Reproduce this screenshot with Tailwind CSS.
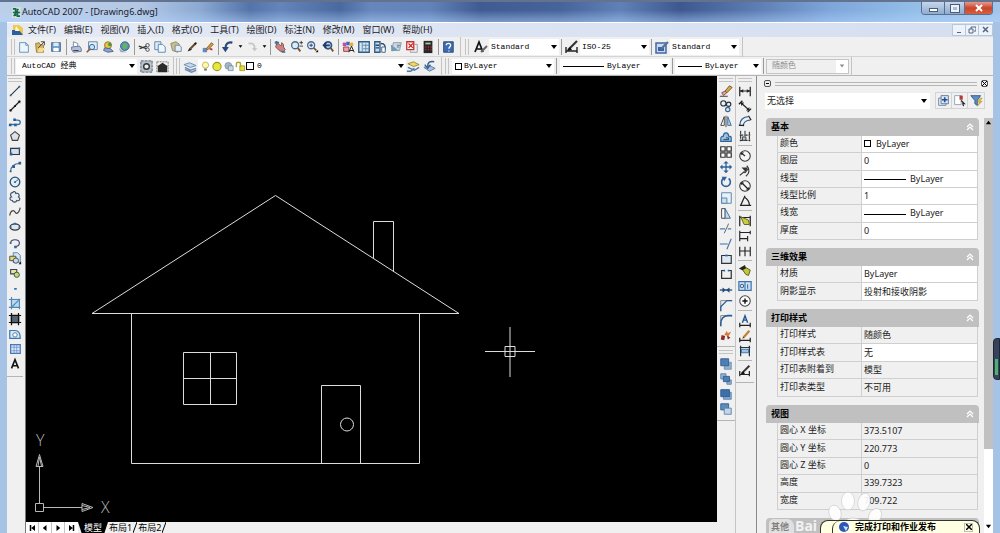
<!DOCTYPE html>
<html lang="zh-CN">
<head>
    <meta charset="UTF-8">
    <meta name="viewport" content="width=device-width, initial-scale=1.0">
    <title>AutoCAD 2007 - [Drawing6.dwg]</title>
    <script src="https://cdn.jsdelivr.net/npm/@tailwindcss/browser@4"></script>
</head>
<body class="h-screen overflow-hidden bg-[#a9c5e6] font-['Noto_Sans','Noto_Sans_CJK_SC',sans-serif] text-[9px] leading-[12px] text-[#222]">

    <!-- Icon set -->
    <svg class="hidden">
        <defs>
            <!-- standard toolbar -->
            <symbol id="new" viewBox="0 0 16 16"><path d="M3 3h7l3 3v8H3z" fill="#eaf5fc" stroke="#5c8db8"/><path d="M10 3v3h3" fill="none" stroke="#5c8db8"/></symbol>
            <symbol id="open" viewBox="0 0 16 16"><path d="M3 4l4-1 1 2 4 1v8H4z" fill="#d8b760" stroke="#8f7a3c"/><path d="M6 9l7-7M9 2h4v4" stroke="#333" fill="none"/><path d="M5 14l2-5h7l-3 5z" fill="#f3dd93"/></symbol>
            <symbol id="save" viewBox="0 0 16 16"><path d="M3 3h10v10H3z" fill="#6f9ac4" stroke="#3c658f"/><path d="M5 3h6v4H5z" fill="#dceaf5"/><path d="M5 9h6v4H5z" fill="#fff"/></symbol>
            <symbol id="print" viewBox="0 0 16 16"><path d="M5 7V2l5 2v4" fill="#fff" stroke="#6d83a8"/><path d="M3 8l9-1 2 3v3l-9 1-2-3z" fill="#b3bfdc" stroke="#5e6f99"/><path d="M5 12h6" stroke="#333"/></symbol>
            <symbol id="preview" viewBox="0 0 16 16"><path d="M4 2h10v9H4z" fill="#dfeefa" stroke="#5d7fa8"/><circle cx="8" cy="8" r="3" fill="#c6e4f8" stroke="#335c8d"/><path d="M6 10l-4 4" stroke="#8a6240" stroke-width="2"/></symbol>
            <symbol id="publish" viewBox="0 0 16 16"><circle cx="8" cy="6" r="4" fill="#e8c438" stroke="#8a6b20"/><path d="M4 9l7 1 3 3-6 1-5-2z" fill="#8aa3d0" stroke="#4c618f"/><circle cx="10" cy="5" r="2" fill="#3b9a55"/></symbol>
            <symbol id="web" viewBox="0 0 16 16"><circle cx="9" cy="7" r="5" fill="#5590c0" stroke="#33638f"/><path d="M8 3l4 2-1 4-3 2-2-4z" fill="#69b45a"/><path d="M2 9l4 3 5 2-7 0z" fill="#9dacc2"/></symbol>
            <symbol id="cut" viewBox="0 0 16 16"><path d="M2 7l9 3M3 10l8-3" stroke="#333" stroke-width="1.5"/><circle cx="12" cy="6" r="2" fill="none" stroke="#345"/><circle cx="12" cy="11" r="2" fill="none" stroke="#345"/></symbol>
            <symbol id="copy" viewBox="0 0 16 16"><path d="M2 2h7v9H2z" fill="#dcebf8" stroke="#5580ac"/><path d="M6 5h5l3 3v6H6z" fill="#eff7fd" stroke="#5580ac"/></symbol>
            <symbol id="paste" viewBox="0 0 16 16"><path d="M2 4l6-2 4 3-2 9-6-2z" fill="#cabf8e" stroke="#8d8358"/><path d="M7 6h5l2 2v5H7z" fill="#e4eef8" stroke="#6685a9"/></symbol>
            <symbol id="match" viewBox="0 0 16 16"><path d="M3 13l2-4 3 2z" fill="#222"/><path d="M6 10l6-6" stroke="#704b30" stroke-width="2.5"/><path d="M11 5l2-2" stroke="#222" stroke-width="2"/></symbol>
            <symbol id="blockedit" viewBox="0 0 16 16"><path d="M2 9h5v5H2z" fill="#6289bd"/><path d="M6 10l6-7 2 2-6 6z" fill="#dd9f3c" stroke="#834c20"/><path d="M10 10l3 1" stroke="#a33" stroke-width="2"/></symbol>
            <symbol id="undo" viewBox="0 0 16 16"><path d="M13 3C7 2 5 5 5 10" fill="none" stroke="#274878" stroke-width="2.5"/><path d="M1 8h8l-4 6z" fill="#274878"/></symbol>
            <symbol id="redo" viewBox="0 0 16 16"><path d="M4 4c5-1 7 1 7 6" fill="none" stroke="#c3c7cb" stroke-width="2"/><path d="M8 9h6l-3 4z" fill="#c3c7cb"/></symbol>
            <symbol id="pan" viewBox="0 0 16 16"><path d="M4 5l2-1 3 3 1-4 2 2 0 3 2 3-3 3-4-2-4-4z" fill="#c9847c" stroke="#84494b"/><path d="M10 13l4 1M2 3h5M4 1v4" stroke="#3b6ea5" stroke-width="2"/></symbol>
            <symbol id="zoomrt" viewBox="0 0 16 16"><circle cx="7" cy="6" r="4" fill="#d9edf9" stroke="#476a95" stroke-width="1.5"/><path d="M10 9l3 4" stroke="#76502f" stroke-width="2"/><path d="M12 3h4M14 1v4M12 7h4" stroke="#333"/></symbol>
            <symbol id="zoomwin" viewBox="0 0 16 16"><circle cx="7" cy="6" r="4" fill="#d9edf9" stroke="#476a95" stroke-width="1.5"/><path d="M5 6h4M7 4v4" stroke="#335"/><path d="M10 9l3 3" stroke="#76502f" stroke-width="2"/><path d="M12 14h3v-3z" fill="#111"/></symbol>
            <symbol id="zoomprev" viewBox="0 0 16 16"><circle cx="8" cy="6" r="4" fill="#bcd6eb" stroke="#335580" stroke-width="2"/><path d="M11 9l3 4" stroke="#76502f" stroke-width="2"/><path d="M3 6h7M6 3L3 6l3 3" stroke="#213a6b" stroke-width="2" fill="none"/></symbol>
            <symbol id="props" viewBox="0 0 16 16"><path d="M2 3h4v4H2z" fill="#b74fae"/><path d="M6 2h4v4H6z" fill="#3d65c0"/><path d="M10 3h4v4h-4z" fill="#e1b13a"/><path d="M3 8h6v5H3z" fill="#e9a8a8" stroke="#934"/><path d="M9 14l3-7 3 7M10 12h4" stroke="#111" fill="none"/></symbol>
            <symbol id="center" viewBox="0 0 16 16"><path d="M2 2h12v12H2z" fill="#d5e6f3" stroke="#2f5a83" stroke-width="1.5"/><path d="M6 2v12M6 6h8M6 10h8M10 4v9" stroke="#5e87ad"/></symbol>
            <symbol id="palette" viewBox="0 0 16 16"><path d="M2 2h6v12H2z" fill="#c5daec" stroke="#2f5a83" stroke-width="1.5"/><path d="M9 4c5 0 5 3 5 7M3 6h4M3 9h4" stroke="#27466e" stroke-width="1.5" fill="none"/><path d="M10 8h4v6h-4z" fill="#fff" stroke="#2f5a83"/></symbol>
            <symbol id="sheet" viewBox="0 0 16 16"><path d="M5 3h9l-2 9H3z" fill="#cbd7e0" stroke="#8296a8"/><path d="M2 5l8 6-7 2" fill="#6f9cb4"/><path d="M9 6h4M9 8h3" stroke="#5d7590"/></symbol>
            <symbol id="markup" viewBox="0 0 16 16"><path d="M2 2h8v9H2z" fill="#fff" stroke="#c03434" stroke-width="1.5"/><path d="M4 4l5 5M9 4L4 9" stroke="#d22" stroke-width="1.5"/><path d="M11 5h3v9H6v-2" fill="none" stroke="#8e97a1"/></symbol>
            <symbol id="calc" viewBox="0 0 16 16"><path d="M3 1h10v14H3z" fill="#272727"/><path d="M5 3h6v2H5z" fill="#a7c7a2"/><path d="M5 8h1M8 8h1M11 8h1M5 11h1M8 11h1M11 11h1" stroke="#e24" stroke-width="1.5"/></symbol>
            <symbol id="help" viewBox="0 0 16 16"><path d="M3 2h11v12H3z" fill="#3c6cae" stroke="#234878"/><path d="M6 6c0-3 5-3 5 0 0 2-2 2-2 4M9 12v1" fill="none" stroke="#fff" stroke-width="1.5"/></symbol>
            <symbol id="textstyle" viewBox="0 0 16 16"><path d="M2 13L6 3l4 10M4 10h4" fill="none" stroke="#111" stroke-width="1.7"/><path d="M8 13l6-6" stroke="#666" stroke-width="2"/></symbol>
            <symbol id="dimstyle" viewBox="0 0 16 16"><path d="M2 8v6M13 8v6M2 12h11" stroke="#222" stroke-width="1.4"/><path d="M4 11l9-9" stroke="#333" stroke-width="2.2"/><path d="M3 12l3-4 2 3z" fill="#111"/></symbol>
            <symbol id="tablestyle" viewBox="0 0 16 16"><path d="M2 4h10v10H2z" fill="#c7daf0" stroke="#4467a3" stroke-width="1.5"/><path d="M4 8h6v4H4z" fill="#3d62a5"/><path d="M7 10l7-7" stroke="#54709c" stroke-width="2.2"/></symbol>
            <symbol id="gear" viewBox="0 0 16 16"><path d="M2 2h12v12H2z" fill="#b8c3cc" stroke="#546371" stroke-dasharray="3 1"/><circle cx="8" cy="8" r="3" fill="#e9eef2" stroke="#333" stroke-width="1.5"/></symbol>
            <symbol id="myspace" viewBox="0 0 16 16"><path d="M2 8l6-4 6 4h-1v6H3V8z" fill="#2b2b2b"/><path d="M2 3h12M2 3v11M14 3v11" stroke="#777" stroke-dasharray="2 1"/></symbol>
            <symbol id="layers" viewBox="0 0 16 16"><path d="M1 6l6-2 7 3-6 2z" fill="#c8d8ea" stroke="#6c8cb4"/><path d="M2 9l6 3 6-2M2 11l7 3 5-2" fill="none" stroke="#6c8cb4" stroke-width="1.5"/></symbol>
            <symbol id="laycur" viewBox="0 0 16 16"><path d="M2 5l6-2 6 3-6 2z" fill="#edd96b" stroke="#9b8b35"/><path d="M2 9l7 3 5-3M1 13h4l4-3" fill="none" stroke="#527ba8" stroke-width="1.5"/></symbol>
            <symbol id="layprev" viewBox="0 0 16 16"><path d="M2 9l6 4 6-3-6-3z" fill="#a9c0da" stroke="#567da6"/><path d="M13 3C8 2 6 4 6 8M3 6l3 4 3-4" fill="none" stroke="#385f92" stroke-width="1.5"/></symbol>
            <symbol id="bulb" viewBox="0 0 16 16"><circle cx="8" cy="6" r="4.500" fill="#fff9ae" stroke="#b39b35"/><path d="M6 11h4v3H6z" fill="#777"/></symbol>
            <symbol id="sun" viewBox="0 0 16 16"><circle cx="8" cy="8" r="6" fill="#e8e63a" stroke="#979528" stroke-width="1.5"/></symbol>
            <symbol id="frzvp" viewBox="0 0 16 16"><circle cx="7" cy="7" r="5" fill="#a3b9c4" stroke="#70858f"/><path d="M7 7h7v7H7z" fill="#c9d8e2" stroke="#62809a"/></symbol>
            <symbol id="lock" viewBox="0 0 16 16"><path d="M7 7h7v7H7z" fill="#e5dc35" stroke="#8c8624"/><path d="M2 9V4c0-3 6-3 6 0v4" fill="none" stroke="#aea52d" stroke-width="2"/></symbol>
            <!-- draw toolbar -->
            <symbol id="line" viewBox="0 0 16 16"><path d="M3 13L13 3" stroke="#333" stroke-width="1.3"/><path d="M2 12h2v2H2zM12 2h2v2h-2z" fill="#2b67a8"/></symbol>
            <symbol id="xline" viewBox="0 0 16 16"><path d="M2 14L14 2" stroke="#222" stroke-width="1.5"/><path d="M2 11v3h3zM11 2h3v3z" fill="#111"/><path d="M7 7h2v2H7z" fill="#111"/></symbol>
            <symbol id="pline" viewBox="0 0 16 16"><path d="M2 12h9c4 0 4-5 0-5H8" fill="none" stroke="#3973ab" stroke-width="1.5"/><path d="M1 11h3v3H1zM7 11h3v3H7zM6 5h3v3H6z" fill="#2b5d95"/></symbol>
            <symbol id="polygon" viewBox="0 0 16 16"><path d="M8 3l5 4-2 6H5L3 7z" fill="#dde3ea" stroke="#444" stroke-width="1.3"/></symbol>
            <symbol id="rect" viewBox="0 0 16 16"><path d="M3 5h10v7H3z" fill="#cfe0ee" stroke="#334" stroke-width="1.3"/><path d="M2 10h3v3H2zM12 4h2v2h-2z" fill="#2b67a8"/></symbol>
            <symbol id="arc" viewBox="0 0 16 16"><path d="M3 13C3 8 7 4 13 4" fill="none" stroke="#3b6c9c" stroke-width="1.4"/><path d="M2 12h2v2H2zM5 6h3v3H5zM12 2h3v3h-3z" fill="#2b5d95"/></symbol>
            <symbol id="circle" viewBox="0 0 16 16"><circle cx="8" cy="8" r="5.500" fill="#e2edf6" stroke="#2c5278" stroke-width="1.5"/><path d="M8 8l4-3" stroke="#2c5278"/><path d="M7 7h2v2H7z" fill="#2b67a8"/></symbol>
            <symbol id="revcloud" viewBox="0 0 16 16"><path d="M5 3c2-2 4-1 4 1 3-1 5 2 3 4 3 2 1 5-2 4-1 3-5 2-5 0-3 0-4-3-1-4-2-2-1-5 1-5z" fill="#e6edf4" stroke="#3d4d60" stroke-width="1.3"/></symbol>
            <symbol id="spline" viewBox="0 0 16 16"><path d="M2 12c1-7 5-6 6-4s4 3 6-5" fill="none" stroke="#444" stroke-width="1.4"/></symbol>
            <symbol id="ellipse" viewBox="0 0 16 16"><ellipse cx="8" cy="8" rx="5.500" ry="3.500" fill="#dbe7f2" stroke="#333" stroke-width="1.4"/><path d="M7 3h2v2H7zM2 7h2v2H2zM12 7h2v2h-2z" fill="#2b67a8"/></symbol>
            <symbol id="earc" viewBox="0 0 16 16"><path d="M3 8c0-5 10-5 10 0 0 3-3 4-5 4" fill="none" stroke="#446" stroke-width="1.3"/><path d="M2 7h2v2H2zM7 11h3v3H7z" fill="#2b67a8"/></symbol>
            <symbol id="insert" viewBox="0 0 16 16"><path d="M6 2h5l3 3v8H6z" fill="#d6e7f4" stroke="#4d7ba8"/><path d="M2 6h7v5H2z" fill="#e2d870" stroke="#444"/><circle cx="9" cy="11" r="3" fill="#c7dcea" stroke="#345"/><path d="M12 15h3v-3z" fill="#111"/></symbol>
            <symbol id="block" viewBox="0 0 16 16"><path d="M3 4h7v5H3z" fill="#e2e6a0" stroke="#345" stroke-width="1.2"/><circle cx="10" cy="10" r="3" fill="#c2dc62" stroke="#345"/></symbol>
            <symbol id="point" viewBox="0 0 16 16"><path d="M7 8h3v2H7z" fill="#3a76ae"/></symbol>
            <symbol id="hatch" viewBox="0 0 16 16"><path d="M3 3h10v10H3z" fill="#bcd9ed"/><path d="M4 1v14M1 4h13M1 13h13M13 3v12M5 12l7-7" stroke="#4f87b3" fill="none" stroke-width="1.3"/></symbol>
            <symbol id="gradient" viewBox="0 0 16 16"><path d="M3 3h10v10H3z" fill="#59636f"/><path d="M4 1v14M1 4h14M1 12h14M12 1v14" stroke="#111" stroke-width="1.4"/></symbol>
            <symbol id="region" viewBox="0 0 16 16"><path d="M2 4h6c4 0 6 3 6 9H2z" fill="#d8eaf7" stroke="#3f79ad" stroke-width="1.4"/><circle cx="8" cy="9" r="2.500" fill="#fff" stroke="#3f79ad"/></symbol>
            <symbol id="table" viewBox="0 0 16 16"><path d="M3 3h11v10H3z" fill="#dce9fa" stroke="#4674b5" stroke-width="1.4"/><path d="M3 6h11M3 10h11M7 3v10M10 3v10" stroke="#7298cf"/></symbol>
            <symbol id="mtext" viewBox="0 0 16 16"><path d="M4 13L8 3l4 10M5 10h6" fill="none" stroke="#111" stroke-width="1.8"/></symbol>
            <!-- modify toolbar -->
            <symbol id="erase" viewBox="0 0 16 16"><path d="M7 8l5-6 3 2-6 6z" fill="#d2ad46" stroke="#6b4a20"/><path d="M3 10l4-2 2 2-4 3z" fill="#e0a3a3" stroke="#844"/><path d="M1 14h9" stroke="#222"/></symbol>
            <symbol id="copyobj" viewBox="0 0 16 16"><circle cx="5" cy="5" r="3" fill="none" stroke="#234" stroke-width="1.3"/><circle cx="11" cy="6" r="2.500" fill="none" stroke="#234" stroke-width="1.3"/><circle cx="10" cy="12" r="2.500" fill="#d9e8f4" stroke="#37628e" stroke-width="1.3"/></symbol>
            <symbol id="mirror" viewBox="0 0 16 16"><path d="M6 3v10H2z" fill="#fff" stroke="#333"/><path d="M10 3v10h4z" fill="#b7d2ea" stroke="#2d649c"/><path d="M8 2v13" stroke="#333"/></symbol>
            <symbol id="offset" viewBox="0 0 16 16"><path d="M2 13h12V9c0-2-3-2-3-2 0-5-6-5-6 0-2 0-3 1-3 3z" fill="#9cc0e1" stroke="#2b629c" stroke-width="1.3"/><path d="M5 11h6V9H8" fill="none" stroke="#234"/></symbol>
            <symbol id="array" viewBox="0 0 16 16"><path d="M2 2h5v5H2zM9 2h5v5H9zM2 9h5v5H2zM9 9h5v5H9z" fill="#fff" stroke="#333" stroke-width="1.4"/></symbol>
            <symbol id="move" viewBox="0 0 16 16"><path d="M8 3v10M3 8h10" stroke="#2b629c" stroke-width="1.5"/><path d="M8 1l3 3H5zM8 15l3-3H5zM1 8l3-3v6zM15 8l-3-3v6z" fill="#2b629c"/></symbol>
            <symbol id="rotate" viewBox="0 0 16 16"><path d="M5 4a5 5 0 1 0 6 0" fill="none" stroke="#2b629c" stroke-width="1.8"/><path d="M3 2h6L6 7z" fill="#2b629c"/></symbol>
            <symbol id="scale" viewBox="0 0 16 16"><path d="M3 2h11v12H3z" fill="#e8f1f8" stroke="#4d7ca8"/><path d="M3 8h6v6H3z" fill="#cfe0ef" stroke="#4d7ca8"/></symbol>
            <symbol id="stretch" viewBox="0 0 16 16"><path d="M3 3h4v11H3z" fill="#fff" stroke="#333"/><path d="M7 3l6 11H7z" fill="#c6dcee" stroke="#37628e"/></symbol>
            <symbol id="trim" viewBox="0 0 16 16"><path d="M1 9h6M10 9h4" stroke="#4c7fb2" stroke-width="1.3"/><path d="M11 3L6 14" stroke="#555"/></symbol>
            <symbol id="extend" viewBox="0 0 16 16"><path d="M1 8h9" stroke="#4c7fb2" stroke-width="1.3"/><path d="M14 2L9 14" stroke="#4f7199" stroke-width="1.3"/></symbol>
            <symbol id="breakpt" viewBox="0 0 16 16"><path d="M3 4h11v9H3z" fill="#dce8f3" stroke="#333" stroke-width="1.3"/><path d="M7 3h3v2H7z" fill="#2b67a8"/></symbol>
            <symbol id="break" viewBox="0 0 16 16"><path d="M6 4H3v9h11V4h-3" fill="none" stroke="#333" stroke-width="1.4"/><path d="M5 3h2v2H5zM10 3h2v2h-2z" fill="#2b67a8"/></symbol>
            <symbol id="join" viewBox="0 0 16 16"><path d="M1 8h14" stroke="#234b76" stroke-width="1.5"/><path d="M4 5l4 3-4 3zM12 5L8 8l4 3z" fill="#234b76"/></symbol>
            <symbol id="chamfer" viewBox="0 0 16 16"><path d="M2 15V3h13" fill="none" stroke="#777"/><path d="M2 15V10l7-7h6" fill="none" stroke="#2b5f98" stroke-width="1.5"/></symbol>
            <symbol id="fillet" viewBox="0 0 16 16"><path d="M2 15V3h13" fill="none" stroke="#777"/><path d="M2 15v-3c0-5 3-9 8-9h5" fill="none" stroke="#2a5f98" stroke-width="1.8"/></symbol>
            <symbol id="explode" viewBox="0 0 16 16"><path d="M3 8l4 1-1 5-4-1zM9 8l4 3-3 2z" fill="#8d2a22"/><path d="M6 8l3-5 1 3 4-2-3 5z" fill="#d9763c"/></symbol>
            <!-- draw order toolbar -->
            <symbol id="front" viewBox="0 0 16 16"><path d="M6 6h8v8H6z" fill="#8fb1d0" stroke="#6b8fb3"/><path d="M2 2h9v8H2z" fill="#4d7fb5" stroke="#2f5d90"/></symbol>
            <symbol id="back" viewBox="0 0 16 16"><path d="M2 2h6v6H2zM9 9h5v5H9z" fill="#8fb1d0" stroke="#5b82aa"/><path d="M5 5h7v6H5z" fill="#4d7fb5" stroke="#2f5d90"/></symbol>
            <symbol id="above" viewBox="0 0 16 16"><path d="M5 6h9v8H5z" fill="#87a9cb" stroke="#5b82aa"/><path d="M2 3h10v8H2z" fill="#3c6faa" stroke="#2f5d90"/></symbol>
            <symbol id="under" viewBox="0 0 16 16"><path d="M2 2h9v7H2z" fill="#5d8bbb" stroke="#2f5d90"/><path d="M6 7h8v7H6z" fill="#c2d6e8" stroke="#5b82aa"/></symbol>
            <!-- dimension toolbar -->
            <symbol id="dlin" viewBox="0 0 16 16"><path d="M2 3v11M14 3v11M2 8h12" stroke="#222" stroke-width="1.4"/><path d="M2 8l4-2v4zM14 8l-4-2v4z" fill="#222"/></symbol>
            <symbol id="dali" viewBox="0 0 16 16"><path d="M3 4l10 9M5 2L1 6M15 11l-4 4" stroke="#222" stroke-width="1.5"/><path d="M3 4h4L4 8zM13 13V9l-4 4z" fill="#222"/></symbol>
            <symbol id="darc" viewBox="0 0 16 16"><path d="M2 13C2 7 6 3 12 3M6 14c0-4 3-7 8-7" fill="none" stroke="#345f8b" stroke-width="1.4"/><path d="M1 13h6M12 2l3 5" stroke="#222" stroke-width="1.3"/></symbol>
            <symbol id="dord" viewBox="0 0 16 16"><path d="M3 2v12M8 2v5M13 3v11M2 7h12M2 13h12" fill="none" stroke="#333" stroke-width="1.2" stroke-dasharray="4 1"/><path d="M5 9h4v4H5z" fill="#a9bfd3" stroke="#333"/></symbol>
            <symbol id="drad" viewBox="0 0 16 16"><circle cx="8" cy="8" r="6" fill="#f3f5f7" stroke="#333" stroke-width="1.2"/><path d="M8 8L4 5" stroke="#222" stroke-width="1.4"/><path d="M3 4h4L4 7z" fill="#222"/></symbol>
            <symbol id="djog" viewBox="0 0 16 16"><path d="M10 2c4 4 3 9-1 12M2 13l5-4 1 1 4-5" fill="none" stroke="#333" stroke-width="1.3"/><path d="M4 4h7L9 9z" fill="#333"/></symbol>
            <symbol id="ddia" viewBox="0 0 16 16"><circle cx="8" cy="8" r="6" fill="#f3f5f7" stroke="#333" stroke-width="1.2"/><path d="M4 4l8 8" stroke="#222" stroke-width="1.4"/><path d="M3 4h4L4 7zM13 12H9l3-3z" fill="#222"/></symbol>
            <symbol id="dang" viewBox="0 0 16 16"><path d="M8 2L3 13h12M8 4c3 2 5 4 5 9" fill="none" stroke="#222" stroke-width="1.4"/></symbol>
            <symbol id="qdim" viewBox="0 0 16 16"><path d="M2 2v12M14 2v12M2 4h12" stroke="#222" stroke-width="1.4"/><path d="M3 3l9 4 1 5-6 0z" fill="#c8cf39" stroke="#54581c"/></symbol>
            <symbol id="dbase" viewBox="0 0 16 16"><path d="M2 2v12M14 2v4M11 8v6M2 4h12M2 11h9" stroke="#222" stroke-width="1.3"/></symbol>
            <symbol id="dcont" viewBox="0 0 16 16"><path d="M2 3v11M8 3v11M14 3v11M2 8h12" stroke="#222" stroke-width="1.3"/></symbol>
            <symbol id="qleader" viewBox="0 0 16 16"><path d="M4 5l5-1 5 3-2 6-3-1z" fill="#c2c735" stroke="#4c5018"/><path d="M1 5l7-4 1 4-4 2z" fill="#222"/></symbol>
            <symbol id="tol" viewBox="0 0 16 16"><path d="M1 3h14v10H1z" fill="#cfe2f3" stroke="#3b73ad" stroke-width="1.4"/><path d="M8 3v10M11 6v5" stroke="#3b73ad" stroke-width="1.3"/><circle cx="4.500" cy="8" r="2" fill="none" stroke="#264f7d"/></symbol>
            <symbol id="cmark" viewBox="0 0 16 16"><circle cx="8" cy="8" r="6" fill="#fff" stroke="#444" stroke-width="1.2"/><path d="M8 5v6M5 8h6" stroke="#111" stroke-width="1.6"/></symbol>
            <symbol id="dedit" viewBox="0 0 16 16"><path d="M5 10l3-8 3 8M6 7h4" fill="none" stroke="#25568c" stroke-width="1.6"/><path d="M2 10v5M14 10v5M2 13h12" stroke="#222" stroke-width="1.4"/></symbol>
            <symbol id="dtedit" viewBox="0 0 16 16"><path d="M2 10v5M14 10v5M2 13h12" stroke="#222" stroke-width="1.4"/><path d="M6 10l7-8" stroke="#c57f2b" stroke-width="2.500"/><path d="M5 11l1-2 1 1z" fill="#111"/></symbol>
            <symbol id="dupd" viewBox="0 0 16 16"><path d="M3 2v12M13 2v12M2 4h12" stroke="#234" stroke-width="1.4"/><path d="M4 6h8v4H4z" fill="#9fc4e3" stroke="#37699c"/></symbol>
            <!-- properties palette -->
            <symbol id="pickadd" viewBox="0 0 16 16"><path d="M2 5h9v9H2z" fill="#e8eef5" stroke="#61789a"/><path d="M5 2h9v10H5z" fill="#dce8f5" stroke="#4a6894"/><path d="M9.500 4v6M6 7h7" stroke="#234f8c" stroke-width="2"/></symbol>
            <symbol id="selobj" viewBox="0 0 16 16"><path d="M2 2h8v11H2z" fill="#fff" stroke="#8897ad"/><path d="M8 2h4v5H8z" fill="#b63838"/><path d="M10 8l4 4-2 0 1 3" fill="none" stroke="#222" stroke-width="1.4"/></symbol>
            <symbol id="qsel" viewBox="0 0 16 16"><path d="M1 2h12L9 8v6l-3-2V8z" fill="#5e8cc4" stroke="#28508a"/><path d="M13 5l-4 5h3l-3 5 6-6h-3l3-4z" fill="#e8c431" stroke="#97751b" stroke-width=".5"/></symbol>
            <symbol id="down" viewBox="0 0 8 8"><path d="M1 2h6L4 6z" fill="currentColor"/></symbol>
            <symbol id="up" viewBox="0 0 8 8"><path d="M1 6h6L4 2z" fill="currentColor"/></symbol>
            <symbol id="chev" viewBox="0 0 8 8"><path d="M1 4l3-3 3 3M1 7l3-3 3 3" fill="none" stroke="#fff" stroke-width="1.2"/></symbol>
        </defs>
    </svg>

    <div class="flex h-full flex-col">
        <!-- Title bar -->
        <header class="flex h-[22px] shrink-0 items-center border-t-2 border-[#62728f] bg-[linear-gradient(to_bottom,transparent_40%,#b4d4ff80),linear-gradient(to_right,#bccfe8,#b4c8e4_14%,#8ba9d2_20%,#5473a8_25%,#6585ba_28%,#4a699e_34%,#6686bc_37%,#6283b9_43%,#3f5b92_48%,#46639a_56%,#6081b7_62%,#3d588f_68%,#5a7ab0_75%,#7ea6da_83%,#94c0e8_92%,#a4c4ea)] pl-3 text-[#16202e]">
            <svg class="mr-px h-[11px] w-[9px]" viewBox="0 0 10 12"><path d="M0 0h10v12H0z" fill="#cfe3da"/><path d="M1 2h3v8M6 2v8h3M2 10l5-8M1 6h8" fill="none" stroke="#18684f" stroke-width="1.8"/></svg>
            <h1 class="flex-1 text-[9px]">AutoCAD 2007 - [Drawing6.dwg]</h1>
            <div class="mr-[7px] flex h-[13px] self-start overflow-hidden rounded-b border border-t-0 border-[#5b6f8e] text-white">
                <button aria-label="最小化" class="flex w-[23px] items-center justify-center border-r border-[#5b6f8e] bg-linear-to-b from-[#c6d6ea] to-[#8eabd0]"><span class="mt-1 h-1 w-[9px] border border-[#4d5d78] bg-white"></span></button>
                <button aria-label="最大化" class="flex w-5 items-center justify-center border-r border-[#5b6f8e] bg-linear-to-b from-[#c6d6ea] to-[#8eabd0]"><span class="h-[7px] w-2 border-2 border-[#eef3fa] outline outline-[#4d5d78]"></span></button>
                <button aria-label="关闭" class="flex w-[27px] items-center justify-center bg-linear-to-b from-[#e39a8b] via-[#c9432c] to-[#d8603c]"><svg class="h-2 w-2" viewBox="0 0 8 8"><path d="M1 1l6 6M7 1L1 7" stroke="#fff" stroke-width="2"/></svg></button>
            </div>
        </header>

        <div class="flex min-h-0 flex-1 flex-col border-x-[7px] border-[#a6c3e6] bg-[#f0f0f0]">
            <!-- Menu bar -->
            <nav class="flex h-[15px] shrink-0 items-center border-t border-white bg-linear-to-r from-[#e4eaf6] via-[#dce4f3] to-[#d5dff0] pl-[5px]">
                <svg class="mr-1 h-3 w-3" viewBox="0 0 12 12"><path d="M1 1h6l4 3v7H1z" fill="#f1c94c"/><path d="M0 6h7l4 5H0z" fill="#2e5f9b"/><path d="M4 2l4 5H3z" fill="#fff6c6"/></svg>
                <div id="menu" class="flex flex-1 gap-2"></div>
                <div class="flex h-3 divide-x divide-[#b9c7dc] border border-[#b9c7dc] bg-[#eef3fa] text-[#546580]">
                    <button aria-label="最小化图形" class="flex w-[13px] items-center justify-center"><span class="mt-1 h-px w-1 bg-current"></span></button>
                    <button aria-label="还原图形" class="flex w-[13px] items-center justify-center"><svg class="h-2 w-2" viewBox="0 0 8 8" fill="none" stroke="currentColor"><path d="M3 3V1h5v4H6M1 3h4v4H1z"/></svg></button>
                    <button aria-label="关闭图形" class="flex w-[13px] items-center justify-center"><svg class="h-2 w-2" viewBox="0 0 8 8"><path d="M1 1l5 5M6 1L1 6" stroke="currentColor" stroke-width="1.5"/></svg></button>
                </div>
            </nav>

            <!-- Standard and styles toolbars -->
            <div class="flex h-5 shrink-0 items-center border-b border-[#d4d4d4] pl-1 font-['Liberation_Mono','Noto_Sans_CJK_SC',monospace] text-[8px] text-black">
                <i class="mr-px h-4 w-1 border-x border-[#c4c4c4]"></i>
                <div id="standard" class="flex items-center"></div>
                <i class="mx-1 h-5 w-px bg-[#c4c4c4]"></i>
                <i class="mr-1 h-4 w-1 border-x border-[#c4c4c4]"></i>
                <button aria-label="文字样式"><svg class="h-4 w-4"><use href="#textstyle"/></svg></button>
                <div class="flex h-4 w-[70px] items-center bg-white pr-px pl-[2px]"><select aria-label="文字样式" class="min-w-0 flex-1 appearance-none"><option>Standard</option></select><svg class="h-2 w-2"><use href="#down"/></svg></div>
                <i class="mx-[2px] h-4 w-px bg-[#9a9a9a]"></i>
                <button aria-label="标注样式"><svg class="h-4 w-4"><use href="#dimstyle"/></svg></button>
                <div class="flex h-4 w-[69px] items-center bg-white pr-px pl-[2px]"><select aria-label="标注样式" class="min-w-0 flex-1 appearance-none"><option>ISO-25</option></select><svg class="h-2 w-2"><use href="#down"/></svg></div>
                <i class="mx-[2px] h-4 w-px bg-[#9a9a9a]"></i>
                <button aria-label="表格样式"><svg class="h-4 w-4"><use href="#tablestyle"/></svg></button>
                <div class="flex h-4 w-[69px] items-center bg-white pr-px pl-[2px]"><select aria-label="表格样式" class="min-w-0 flex-1 appearance-none"><option>Standard</option></select><svg class="h-2 w-2"><use href="#down"/></svg></div>
                <i class="ml-[3px] h-5 w-px bg-[#c4c4c4]"></i>
            </div>

            <!-- Workspace, layer and object property toolbars -->
            <div class="flex h-[19px] shrink-0 items-center border-b border-[#b5b5b5] pl-1 font-['Liberation_Mono','Noto_Sans_CJK_SC',monospace] text-[8px] text-black">
                <i class="mr-px h-4 w-1 border-x border-[#c4c4c4]"></i>
                <div class="flex h-[15px] w-[121px] items-center bg-white pr-px pl-[6px]"><select aria-label="工作空间" class="min-w-0 flex-1 appearance-none"><option>AutoCAD 经典</option></select><svg class="h-2 w-2"><use href="#down"/></svg></div>
                <button aria-label="工作空间设置" class="ml-[2px]"><svg class="h-[15px] w-[15px]"><use href="#gear"/></svg></button>
                <button aria-label="我的工作空间" class="ml-px"><svg class="h-[15px] w-[15px]"><use href="#myspace"/></svg></button>
                <i class="mr-[2px] ml-[3px] h-[19px] w-px bg-[#c4c4c4]"></i>
                <i class="mr-[3px] h-4 w-1 border-x border-[#c4c4c4]"></i>
                <button aria-label="图层特性管理器"><svg class="h-[15px] w-[15px]"><use href="#layers"/></svg></button>
                <div class="flex h-[15px] w-[208px] items-center bg-white pr-px pl-[2px]">
                    <svg class="h-[11px] w-[11px]"><use href="#bulb"/></svg>
                    <svg class="h-[11px] w-3"><use href="#sun"/></svg>
                    <svg class="h-[11px] w-3"><use href="#frzvp"/></svg>
                    <svg class="h-[11px] w-[11px]"><use href="#lock"/></svg>
                    <span class="mr-[3px] h-2 w-2 border border-black"></span>
                    <select aria-label="图层" class="min-w-0 flex-1 appearance-none"><option>0</option></select><svg class="h-2 w-2"><use href="#down"/></svg>
                </div>
                <button aria-label="将对象的图层置为当前"><svg class="h-[15px] w-[15px]"><use href="#laycur"/></svg></button>
                <button aria-label="上一个图层" class="ml-px"><svg class="h-[15px] w-[15px]"><use href="#layprev"/></svg></button>
                <i class="mr-[3px] ml-1 h-[19px] w-px bg-[#c4c4c4]"></i>
                <i class="mr-[3px] h-4 w-1 border-x border-[#c4c4c4]"></i>
                <div class="flex h-[15px] w-[102px] items-center bg-white pr-px pl-[3px]"><span class="mr-[2px] h-[7px] w-[7px] border border-black"></span><select aria-label="颜色" class="min-w-0 flex-1 appearance-none"><option>ByLayer</option></select><svg class="h-2 w-2"><use href="#down"/></svg></div>
                <i class="mr-[3px] ml-[2px] h-4 w-px bg-[#9a9a9a]"></i>
                <div class="flex h-[15px] w-[110px] items-center bg-white pr-px pl-[3px]"><span class="mr-[3px] h-px w-[41px] bg-black"></span><select aria-label="线型" class="min-w-0 flex-1 appearance-none"><option>ByLayer</option></select><svg class="h-2 w-2"><use href="#down"/></svg></div>
                <i class="mx-[2px] h-4 w-px bg-[#9a9a9a]"></i>
                <div class="flex h-[15px] w-[86px] items-center bg-white pr-px pl-[3px]"><span class="mr-[3px] h-px w-6 bg-black"></span><select aria-label="线宽" class="min-w-0 flex-1 appearance-none"><option>ByLayer</option></select><svg class="h-2 w-2"><use href="#down"/></svg></div>
                <i class="mx-[2px] h-4 w-px bg-[#9a9a9a]"></i>
                <div class="flex h-[15px] w-[83px] items-center border border-[#c4c4c4] pl-[5px] text-[#8c8c8c]"><select aria-label="打印样式" disabled class="min-w-0 flex-1 appearance-none"><option>随颜色</option></select><span class="flex h-full w-3 items-center justify-center bg-white"><svg class="h-[6px] w-[6px]"><use href="#down"/></svg></span></div>
                <i class="ml-[2px] h-[19px] w-px bg-[#c4c4c4]"></i>
            </div>

            <main class="flex min-h-0 flex-1">
                <!-- Draw toolbar -->
                <aside class="w-[19px] shrink-0 border-r border-[#777]">
                    <div class="mr-[2px] flex h-[301px] flex-col items-center border-b border-[#b5b5b5] pt-[2px] pb-1">
                        <i class="mb-px h-1 w-[14px] border-y border-[#c4c4c4]"></i>
                        <div id="draw" class="flex flex-1 flex-col"></div>
                    </div>
                </aside>

                <!-- Model space -->
                <section class="flex min-w-0 flex-1 flex-col">
                    <svg class="min-h-0 w-full flex-1 bg-black" viewBox="26 76 691 446" preserveAspectRatio="none" fill="none" stroke="#dcdcdc">
                        <path d="M92 313.500L275.500 195.500 459 313.500z"/>
                        <path d="M131.500 313.500v150h288v-150"/>
                        <path d="M373.500 258.500v-37h20v50"/>
                        <path d="M183.500 352.500h53v52h-53zM210.500 352.500v52M183.500 378.500h53"/>
                        <path d="M321.500 463.500v-78h39v78"/>
                        <circle cx="347" cy="424.500" r="6.500"/>
                        <path d="M485 351.500h50M510 327v50M505 346.500h10v10h-10z"/>
                        <g stroke="#b8b8b8">
                            <path d="M35.500 503.500h8v8h-8zM39.500 503v-36M43 507.500h39M36 466.500l3.500-12 3.500 12zM82 503.500l11 4-11 4zM38 466l1.500-9 2 9M82 505.500l8 2-8 2"/>
                        </g>
                        <g fill="#b8b8b8" stroke="none" font-family="Open Sans" font-weight="300" font-size="16">
                            <text x="36" y="446">Y</text>
                            <text x="101" y="513">X</text>
                        </g>
                    </svg>
                    <!-- Layout tabs -->
                    <div class="flex h-[11px] shrink-0 bg-[#f0f0f0] leading-[11px] text-black">
                        <div class="flex divide-x divide-[#c4c4c4] bg-white">
                            <button aria-label="第一个" class="flex w-[13px] items-center justify-center"><svg class="h-[6px] w-[6px]" viewBox="0 0 8 8"><path d="M1 0h2v8H1zM8 0v8L3 4z"/></svg></button>
                            <button aria-label="上一个" class="flex w-[13px] items-center justify-center"><svg class="h-[6px] w-[6px]" viewBox="0 0 8 8"><path d="M6 0v8L1 4z"/></svg></button>
                            <button aria-label="下一个" class="flex w-[13px] items-center justify-center"><svg class="h-[6px] w-[6px]" viewBox="0 0 8 8"><path d="M2 0v8l5-4z"/></svg></button>
                            <button aria-label="最后一个" class="flex w-[13px] items-center justify-center"><svg class="h-[6px] w-[6px]" viewBox="0 0 8 8"><path d="M5 0h2v8H5zM0 0v8l5-4z"/></svg></button>
                        </div>
                        <button class="bg-black px-[6px] text-white [clip-path:polygon(0_0,100%_0,88%_100%,12%_100%)]">模型</button>
                        <button class="px-px">布局1</button>
                        <svg class="h-[11px] w-1" viewBox="0 0 4 11"><path d="M4 0L0 11" stroke="#000"/></svg>
                        <button class="px-px">布局2</button>
                        <svg class="h-[11px] w-1" viewBox="0 0 4 11"><path d="M4 0L0 11" stroke="#000"/></svg>
                    </div>
                </section>

                <!-- Modify and draw order toolbars -->
                <aside class="flex w-[19px] shrink-0 flex-col items-center border-r border-[#c4c4c4] pt-[2px]">
                    <i class="mb-px h-1 w-[14px] border-y border-[#c4c4c4]"></i>
                    <div id="modify" class="flex h-[260px] flex-col"></div>
                    <i class="mt-[3px] mb-[3px] h-px w-full bg-[#b5b5b5]"></i>
                    <i class="mb-[2px] h-1 w-[14px] border-y border-[#c4c4c4]"></i>
                    <div id="order" class="flex h-[60px] flex-col"></div>
                    <i class="mt-1 h-px w-full bg-[#b5b5b5]"></i>
                </aside>

                <!-- Dimension toolbar -->
                <aside class="flex w-[18px] shrink-0 flex-col items-center pt-[2px]">
                    <i class="mb-px h-1 w-[14px] border-y border-[#c4c4c4]"></i>
                    <div id="dimension" class="flex flex-col items-center"></div>
                    <i class="mt-1 h-px w-full bg-[#b5b5b5]"></i>
                </aside>

                <!-- Properties palette -->
                <aside class="flex w-[239px] shrink-0 flex-col overflow-hidden pl-[2px]">
                    <div class="flex min-h-0 flex-1 flex-col border-l border-[#8a8a8a] pl-[3px]">
                        <div class="flex items-center gap-1 pt-1 pr-[5px] pl-1">
                            <button aria-label="折叠" class="flex h-[7px] w-[7px] items-center justify-center rounded-xs border border-[#555]"><span class="h-px w-[3px] bg-black"></span></button>
                            <i class="h-1 flex-1 border-y border-[#b5b5b5]"></i>
                            <button aria-label="关闭特性" class="flex h-[7px] w-[7px] items-center justify-center rounded-xs border border-[#555]"><svg class="h-[5px] w-[5px]" viewBox="0 0 5 5"><path d="M0 0l5 5M5 0L0 5" stroke="#000"/></svg></button>
                        </div>
                        <div class="mt-[5px] flex items-center pr-2 pl-[5px]">
                            <div class="flex h-4 flex-1 items-center bg-white px-[2px]"><select aria-label="选择集" class="min-w-0 flex-1 appearance-none"><option>无选择</option></select><svg class="h-2 w-2 text-black"><use href="#down"/></svg></div>
                            <div id="pick" class="ml-[5px] flex divide-x divide-[#d4d4d4] border border-[#d4d4d4]"></div>
                        </div>
                        <div class="mt-[9px] flex min-h-0 flex-1">
                            <div id="groups" class="min-w-0 flex-1 overflow-hidden pr-[5px] pl-[6px]"></div>
                            <div class="flex w-[9px] flex-col items-center bg-white text-black">
                                <div class="flex h-[331px] w-full justify-center bg-[#c1c1c1]"><svg class="mt-px h-[7px] w-[7px]"><use href="#up"/></svg></div>
                                <svg class="mt-auto mb-[3px] h-[7px] w-[7px]"><use href="#down"/></svg>
                            </div>
                        </div>
                    </div>
                </aside>
            </main>
        </div>
    </div>

    <!-- Watermark -->
    <svg class="absolute right-[30px] bottom-0 h-[42px] w-[205px]" viewBox="765 491 205 42" fill="#fff">
        <g opacity=".9" stroke="#c4c4c4" stroke-width=".6">
            <ellipse cx="848" cy="501" rx="6.500" ry="9"/>
            <ellipse cx="864" cy="502" rx="6" ry="9" transform="rotate(15 864 502)"/>
            <ellipse cx="835" cy="513" rx="6" ry="8" transform="rotate(-20 835 513)"/>
            <ellipse cx="875" cy="516" rx="6" ry="8" transform="rotate(30 875 516)"/>
            <path d="M838 533c2-10 8-15 15-15s14 6 17 15z"/>
        </g>
        <path d="M769 533v-9c0-3 2-5 5-5h13c5 0 7 4 7 8v6z" opacity=".5"/>
        <text x="795" y="531" font-family="Open Sans" font-weight="700" font-size="14" opacity=".8">Bai</text>
    </svg>

    <!-- Plot notification -->
    <div class="absolute right-[20px] bottom-0 flex h-[13px] w-[160px] rounded-t-lg border border-b-0 border-[#333] bg-[#ffffe1] pl-[11px]">
        <div class="flex flex-1 items-center rounded-tl-lg border-l border-[#333] pr-[6px] pl-[6px] font-bold text-black">
            <svg class="mr-[6px] h-[10px] w-[10px]" viewBox="0 0 10 10"><circle cx="5" cy="5" r="5" fill="#2c57b8"/><path d="M4 4l5 1-2 4z" fill="#cfe0ff"/></svg>
            <span class="flex-1">完成打印和作业发布</span>
            <button aria-label="关闭通知" class="flex h-[9px] w-[9px] items-center justify-center border border-[#bbb]"><svg class="h-[6px] w-[6px]" viewBox="0 0 5 5"><path d="M0 0l5 5M5 0L0 5" stroke="#000" stroke-width="1.200"/></svg></button>
        </div>
    </div>

    <!-- Side gadget -->
    <div class="absolute top-[338px] right-0 flex h-[42px] w-[7px] items-center justify-center rounded-l border border-[#1c2638] bg-[#36435a]"><span class="mt-4 h-4 w-[3px] bg-[#4fae72]"></span></div>

    <script>
        const menus = ['文件(F)', '编辑(E)', '视图(V)', '插入(I)', '格式(O)', '工具(T)', '绘图(D)', '标注(N)', '修改(M)', '窗口(W)', '帮助(H)'];
        document.getElementById('menu').innerHTML = menus.map(m => `<button>${m}</button>`).join('');

        // '|' is a separator, 'v' a small drop-down arrow
        function toolbar(id, list, btn, svg, sep) {
            document.getElementById(id).innerHTML = list.split(' ').map(n => {
                if (n === '|') return `<i class="${sep}"></i>`;
                if (n === 'v') return '<button aria-label="展开" class="flex w-2 justify-center"><svg class="h-[5px] w-[5px]"><use href="#down"/></svg></button>';
                return `<button aria-label="${n}" class="${btn}"><svg class="${svg}"><use href="#${n}"/></svg></button>`;
            }).join('');
        }

        toolbar('standard', 'new open save | print preview publish web | cut copy paste match blockedit | undo v redo v | pan zoomrt zoomwin zoomprev | props center palette sheet markup calc | help', 'block', 'h-[14px] w-4', 'mr-px ml-[2px] h-4 w-px bg-[#9a9a9a]');
        toolbar('draw', 'line xline pline polygon rect arc circle revcloud spline ellipse earc insert block point hatch gradient region table mtext', 'flex flex-1 items-center', 'h-[14px] w-[14px]', '');
        toolbar('modify', 'erase copyobj mirror offset array move rotate scale stretch trim extend breakpt break join chamfer fillet explode', 'flex flex-1 items-center', 'h-[14px] w-[14px]', '');
        toolbar('order', 'front back above under', 'flex flex-1 items-center', 'h-[14px] w-[14px]', '');
        toolbar('dimension', 'dlin dali darc dord | drad djog ddia dang | qdim dbase dcont | qleader tol cmark | dedit dtedit dupd | dimstyle', 'flex h-[15px] items-center', 'h-[14px] w-[14px]', 'my-[2px] h-px w-[14px] bg-[#b5b5b5]');
        toolbar('pick', 'pickadd selobj qsel', 'flex h-[15px] w-4 items-center justify-center', 'h-[13px] w-[13px]', '');

        const swatch = '<span class="mr-[5px] inline-block h-[7px] w-[7px] border border-black"></span>ByLayer';
        const rule = '<span class="mr-1 inline-block h-px w-[42px] bg-black align-middle"></span>ByLayer';
        const groups = [
            { name: '基本', size: 'h-[104px]', rows: [['颜色', swatch, 1], ['图层', '0', 1], ['线型', rule, 1], ['线型比例', '1', 1], ['线宽', rule, 1], ['厚度', '0', 1]] },
            { name: '三维效果', size: 'h-[35px]', rows: [['材质', 'ByLayer', 1], ['阴影显示', '投射和接收阴影', 1]] },
            { name: '打印样式', size: 'h-[70px]', rows: [['打印样式', '随颜色'], ['打印样式表', '无', 1], ['打印表附着到', '模型'], ['打印表类型', '不可用']] },
            { name: '视图', size: 'h-[87px]', rows: [['圆心 X 坐标', '373.5107'], ['圆心 Y 坐标', '220.773'], ['圆心 Z 坐标', '0'], ['高度', '339.7323'], ['宽度', '709.722']] },
            { name: '其他', size: '', rows: [] }
        ];
        document.getElementById('groups').innerHTML = groups.map(g => `
            <section class="mb-2">
                <h2 class="flex h-[18px] items-center justify-between rounded-t bg-[#c0c0c0] pr-[5px] pl-[5px] font-bold text-black">${g.name}<svg class="h-2 w-2"><use href="#chev"/></svg></h2>
                <table class="ml-[11px] w-[201px] table-fixed border-collapse ${g.size}">
                    ${g.rows.map(r => `<tr class="border-b border-[#cfcfcf]"><th class="w-[84px] border-x border-[#cfcfcf] pb-[2px] pl-[2px] text-left align-middle font-normal">${r[0]}</th><td class="border-r border-[#cfcfcf] pl-[2px] align-middle ${r[2] ? 'bg-white' : ''}">${r[1]}</td></tr>`).join('')}
                </table>
            </section>`).join('');
    </script>
</body>
</html>
